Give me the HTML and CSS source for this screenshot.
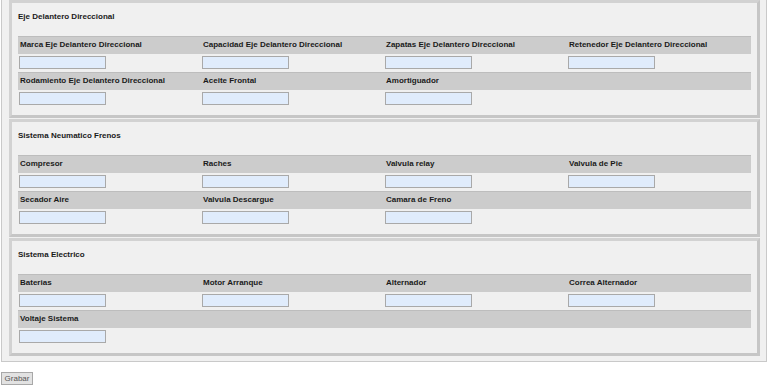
FILE: index.html
```html
<!DOCTYPE html>
<html lang="es">
<head>
<meta charset="utf-8">
<title>Formulario</title>
<link rel="stylesheet" href="styles.css">
</head>
<body>
<div class="outer">
  <div class="box">
    <div class="title">Eje Delantero Direccional</div>
    <div class="grid">
      <div class="hrow"><span>Marca Eje Delantero Direccional</span><span>Capacidad Eje Delantero Direccional</span><span>Zapatas Eje Delantero Direccional</span><span>Retenedor Eje Delantero Direccional</span></div>
      <div class="irow"><input type="text"><input type="text"><input type="text"><input type="text"></div>
      <div class="hrow"><span>Rodamiento Eje Delantero Direccional</span><span>Aceite Frontal</span><span>Amortiguador</span><span></span></div>
      <div class="irow"><input type="text"><input type="text"><input type="text"></div>
    </div>
  </div>
  <div class="box">
    <div class="title">Sistema Neumatico Frenos</div>
    <div class="grid">
      <div class="hrow"><span>Compresor</span><span>Raches</span><span>Valvula relay</span><span>Valvula de Pie</span></div>
      <div class="irow"><input type="text"><input type="text"><input type="text"><input type="text"></div>
      <div class="hrow"><span>Secador Aire</span><span>Valvula Descargue</span><span>Camara de Freno</span><span></span></div>
      <div class="irow"><input type="text"><input type="text"><input type="text"></div>
    </div>
  </div>
  <div class="box">
    <div class="title">Sistema Electrico</div>
    <div class="grid">
      <div class="hrow"><span>Baterias</span><span>Motor Arranque</span><span>Alternador</span><span>Correa Alternador</span></div>
      <div class="irow"><input type="text"><input type="text"><input type="text"><input type="text"></div>
      <div class="hrow"><span>Voltaje Sistema</span><span></span><span></span><span></span></div>
      <div class="irow"><input type="text"></div>
    </div>
  </div>
</div>
<div class="actions"><button type="button" class="btn">Grabar</button></div>
</body>
</html>
```
FILE: styles.css
```css
html, body {
  margin: 0;
  padding: 0;
  background: #ffffff;
  font-family: "Liberation Sans", Arial, sans-serif;
  font-size: 8px;
  color: #1a1a1a;
}
.outer {
  margin: 0 1px;
  border: 1px solid #c9c9c9;
  border-top: none;
  background: #f0f0f0;
  padding: 0 6px 5px 7px;
}
.box {
  border: 3px solid #cfcfcf;
  border-color: #d2d2d2 #c6c6c6 #c6c6c6 #d2d2d2;
  padding: 0 6px 7px 6px;
  margin-bottom: 1px;
}
.box:last-child {
  margin-bottom: 0;
}
.title {
  font-weight: bold;
  height: 33px;
  line-height: 10px;
  padding-top: 9px;
  box-sizing: border-box;
}
.grid {
  display: flex;
  flex-direction: column;
}
.hrow, .irow {
  display: grid;
  grid-template-columns: repeat(4, 183px);
  height: 18px;
}
.hrow {
  background: #cccccc;
  border-top: 1px solid #bdbdbd;
  box-sizing: border-box;
}
.hrow span {
  font-weight: bold;
  padding: 3px 0 0 2px;
  white-space: nowrap;
}
.irow input {
  width: 87px;
  height: 13px;
  box-sizing: border-box;
  margin: 2px 0 0 1px;
  padding: 0;
  border: 1px solid #a9a9a9;
  background: #e0ecfc;
  font-size: 8px;
}
.actions {
  padding: 10px 0 0 1px;
}
.btn {
  display: block;
  width: 32px;
  height: 13px;
  padding: 0;
  font-family: "Liberation Sans", Arial, sans-serif;
  font-size: 8px;
  color: #555555;
  background: #e2e2e2;
  border: 1px solid #a8a8a8;
  border-radius: 0;
  line-height: 11px;
}
```
